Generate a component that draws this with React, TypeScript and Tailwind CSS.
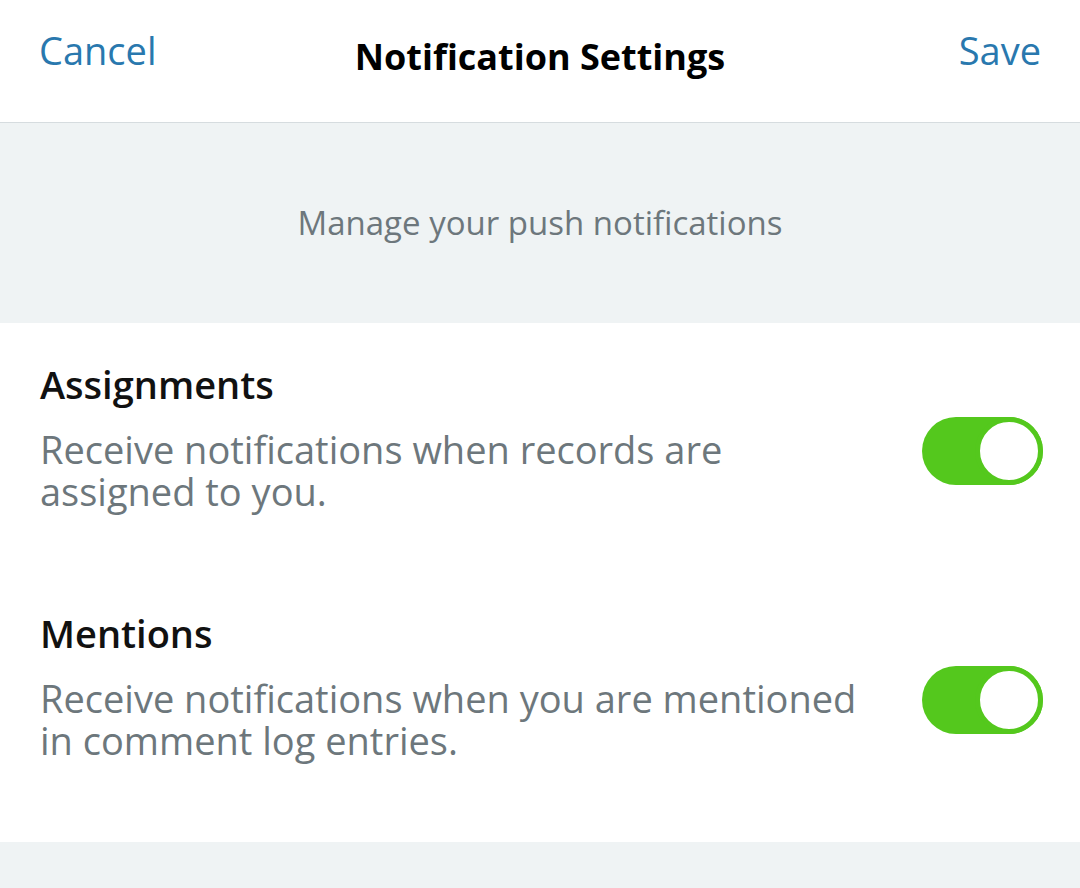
import type {ReactElement} from "react";

function Toggle(): ReactElement {
    return (
        <div className="w-[121px] h-[68px] rounded-full bg-[#54c81d] flex items-center justify-end shrink-0">
            <div className="w-[68px] h-[68px] rounded-full bg-white border-[5px] border-[#54c81d]" />
        </div>
    );
}

function SettingRow({title, text}: {title: string; text: string}): ReactElement {
    return (
        <div className="flex items-start justify-between">
            <div className="w-[830px]">
                <div className="text-[38px] leading-[48px] font-semibold text-[#111]">{title}</div>
                <p className="mt-[20px] text-[38px] leading-[42px] text-[#6d777c]">{text}</p>
            </div>
            <div className="mt-[57px]">
                <Toggle />
            </div>
        </div>
    );
}

export default function App(): ReactElement {
    return (
        <div className="w-[1080px] h-[888px] bg-[#eff3f4] overflow-hidden" style={{fontFamily: "'Open Sans', sans-serif"}}>
            { /* Top bar */ }
            <div className="h-[123px] bg-white border-b border-[#d6dcdf] grid grid-cols-[1fr_auto_1fr] items-start px-[39px]">
                <div>
                    <button type="button" className="mt-[25px] text-[38px] leading-[50px] text-[#2978ae]">Cancel</button>
                </div>
                <h1 className="mt-[32px] text-[36px] leading-[50px] font-bold text-black">Notification Settings</h1>
                <div className="flex justify-end">
                    <button type="button" className="mt-[25px] text-[38px] leading-[50px] text-[#2978ae]">Save</button>
                </div>
            </div>

            <div className="h-[200px] flex items-center justify-center">
                <p className="text-[33px] text-[#6d777c]">Manage your push notifications</p>
            </div>

            <div className="bg-white h-[519px] pl-[40px] pr-[37px] pt-[37px]">
                <div className="flex flex-col gap-[97px]">
                    <SettingRow title="Assignments" text="Receive notifications when records are assigned to you." />
                    <SettingRow title="Mentions" text="Receive notifications when you are mentioned in comment log entries." />
                </div>
            </div>
        </div>
    );
}
